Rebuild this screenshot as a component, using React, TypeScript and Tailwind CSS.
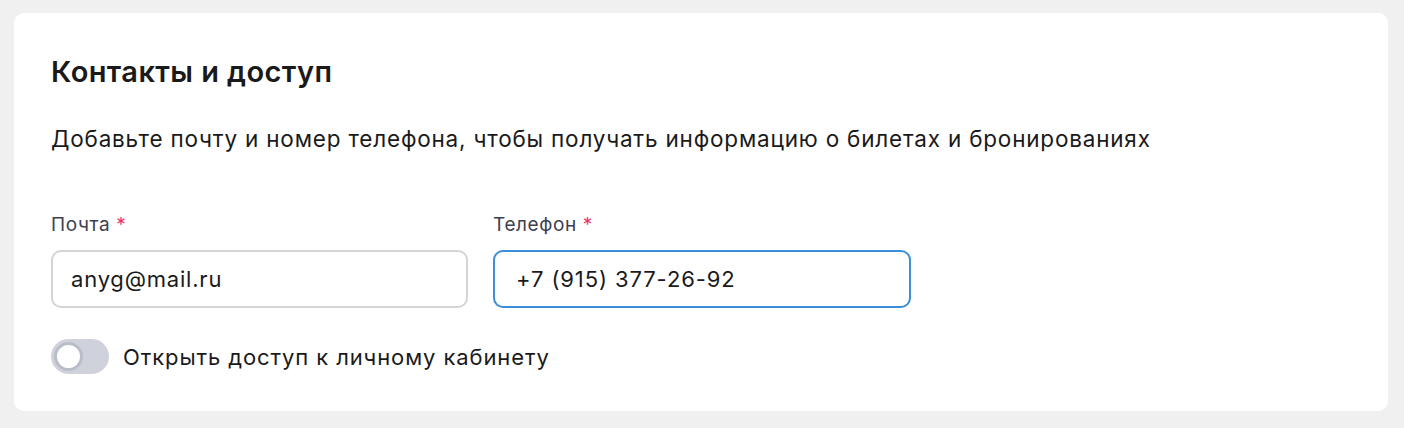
import { useState } from "react";

// Required mark
function Req() {
  return <span className="text-[#e8336d] ml-[6px]">*</span>;
}

// Switch
function Switch({ on, onChange }: { on: boolean; onChange: (v: boolean) => void }) {
  return (
    <button
      onClick={() => onChange(!on)}
      className={`relative w-[58px] h-[35px] rounded-full shrink-0 cursor-pointer ${
        on ? "bg-[#3b8fd6]" : "bg-[#cfd2da]"
      }`}
    >
      <span
        className={`absolute top-[3px] w-[29px] h-[29px] rounded-full bg-white border-[3px] border-[#b9bdc7] ${
          on ? "left-[26px]" : "left-[3px]"
        }`}
      />
    </button>
  );
}

export default function App() {
  const [email, setEmail] = useState("anyg@mail.ru");
  const [phone, setPhone] = useState("+7 (915) 377-26-92");
  const [access, setAccess] = useState(false);

  return (
    <div
      className="min-h-[428px] bg-[#f0f0f0] pt-[13px] pl-[14px] pr-[16px] pb-[18px]"
      style={{ fontFamily: "Inter, 'Noto Sans', sans-serif" }}
    >
      <div className="bg-white rounded-[10px] pl-[37px] pr-[37px] pt-[40px] pb-[37px]">
        <h2 className="text-[29px] leading-[37px] tracking-[0.4px] font-semibold text-[#1a1a1a]">
          Контакты и доступ
        </h2>

        <p className="mt-[35px] text-[22.5px] leading-[28px] tracking-[0.8px] text-[#1a1a1a]">
          Добавьте почту и номер телефона, чтобы получать информацию о билетах и бронированиях
        </p>

        <div className="mt-[60px] flex gap-[25px]">
          <label className="flex flex-col w-[417px]">
            <span className="text-[19px] leading-[24px] tracking-[0.6px] text-[#3d4050]">
              Почта<Req />
            </span>
            <input
              value={email}
              onChange={(e) => setEmail(e.target.value)}
              className="mt-[13px] h-[58px] rounded-[10px] border-2 border-[#d3d4d8] px-[18px] text-[22px] tracking-[0.8px] text-[#1a1a1a] outline-none"
            />
          </label>
          <label className="flex flex-col w-[418px]">
            <span className="text-[19px] leading-[24px] tracking-[0.6px] text-[#3d4050]">
              Телефон<Req />
            </span>
            <input
              value={phone}
              onChange={(e) => setPhone(e.target.value)}
              className="mt-[13px] h-[58px] rounded-[10px] border-2 border-[#3b8fd6] px-[21px] text-[22px] tracking-[0.9px] text-[#1a1a1a] outline-none"
            />
          </label>
        </div>

        <div className="mt-[31px] flex items-center gap-[14px]">
          <Switch on={access} onChange={setAccess} />
          <span className="text-[22px] leading-[28px] tracking-[0.9px] text-[#1a1a1a]">
            Открыть доступ к личному кабинету
          </span>
        </div>
      </div>
    </div>
  );
}
